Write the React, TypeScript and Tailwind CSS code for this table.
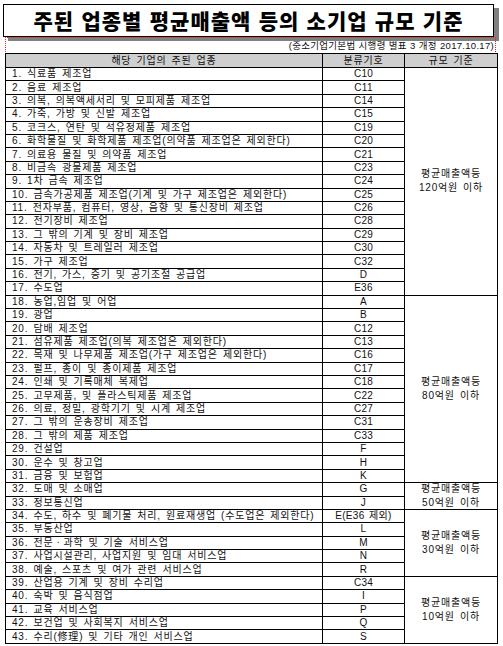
import React from 'react';

/** One row of the table: industry and KSIC code. */
type Row = { name: string; code: string };

/** Size bands; `span` must be a literal Tailwind class so it survives the build. */
const BANDS: { label: string; rows: number; span: string }[] = [
  { label: '120억원 이하', rows: 17, span: 'row-span-17' },
  { label: '80억원 이하', rows: 14, span: 'row-span-14' },
  { label: '50억원 이하', rows: 2, span: 'row-span-2' },
  { label: '30억원 이하', rows: 5, span: 'row-span-5' },
  { label: '10억원 이하', rows: 5, span: 'row-span-5' },
];

const ROWS: Row[] = [
  { name: '식료품 제조업', code: 'C10' },
  { name: '음료 제조업', code: 'C11' },
  { name: '의복, 의복액세서리 및 모피제품 제조업', code: 'C14' },
  { name: '가죽, 가방 및 신발 제조업', code: 'C15' },
  { name: '코크스, 연탄 및 석유정제품 제조업', code: 'C19' },
  { name: '화학물질 및 화학제품 제조업(의약품 제조업은 제외한다)', code: 'C20' },
  { name: '의료용 물질 및 의약품 제조업', code: 'C21' },
  { name: '비금속 광물제품 제조업', code: 'C23' },
  { name: '1차 금속 제조업', code: 'C24' },
  { name: '금속가공제품 제조업(기계 및 가구 제조업은 제외한다)', code: 'C25' },
  { name: '전자부품, 컴퓨터, 영상, 음향 및 통신장비 제조업', code: 'C26' },
  { name: '전기장비 제조업', code: 'C28' },
  { name: '그 밖의 기계 및 장비 제조업', code: 'C29' },
  { name: '자동차 및 트레일러 제조업', code: 'C30' },
  { name: '가구 제조업', code: 'C32' },
  { name: '전기, 가스, 증기 및 공기조절 공급업', code: 'D' },
  { name: '수도업', code: 'E36' },
  { name: '농업,임업 및 어업', code: 'A' },
  { name: '광업', code: 'B' },
  { name: '담배 제조업', code: 'C12' },
  { name: '섬유제품 제조업(의복 제조업은 제외한다)', code: 'C13' },
  { name: '목재 및 나무제품 제조업(가구 제조업은 제외한다)', code: 'C16' },
  { name: '펄프, 종이 및 종이제품 제조업', code: 'C17' },
  { name: '인쇄 및 기록매체 복제업', code: 'C18' },
  { name: '고무제품, 및 플라스틱제품 제조업', code: 'C22' },
  { name: '의료, 정밀, 광학기기 및 시계 제조업', code: 'C27' },
  { name: '그 밖의 운송장비 제조업', code: 'C31' },
  { name: '그 밖의 제품 제조업', code: 'C33' },
  { name: '건설업', code: 'F' },
  { name: '운수 및 창고업', code: 'H' },
  { name: '금융 및 보험업', code: 'K' },
  { name: '도매 및 소매업', code: 'G' },
  { name: '정보통신업', code: 'J' },
  { name: '수도, 하수 및 폐기물 처리, 원료재생업 (수도업은 제외한다)', code: 'E(E36 제외)' },
  { name: '부동산업', code: 'L' },
  { name: '전문ㆍ과학 및 기술 서비스업', code: 'M' },
  { name: '사업시설관리, 사업지원 및 임대 서비스업', code: 'N' },
  { name: '예술, 스포츠 및 여가 관련 서비스업', code: 'R' },
  { name: '산업용 기계 및 장비 수리업', code: 'C34' },
  { name: '숙박 및 음식점업', code: 'I' },
  { name: '교육 서비스업', code: 'P' },
  { name: '보건업 및 사회복지 서비스업', code: 'Q' },
  { name: '수리(修理) 및 기타 개인 서비스업', code: 'S' },
];

// row index -> band that starts there
const BAND_STARTS = new Map<number, (typeof BANDS)[number]>();
{
  let at = 0;
  for (const band of BANDS) {
    BAND_STARTS.set(at, band);
    at += band.rows;
  }
}

export default function App() {
  return (
    <div className="min-h-[646px] w-[503px] bg-white pt-[4px] pl-[3px] text-black font-['Liberation_Sans','Noto_Sans_CJK_KR',sans-serif]">
      {/* Title box with the spreadsheet's drop shadow */}
      <div className="flex h-[33px] w-[491px] items-center justify-center border border-black bg-white shadow-[5px_4px_0_0_#808080]">
        <h1 className="text-[21px] leading-none font-black tracking-[1px] [word-spacing:1.5px] font-['Noto_Sans_CJK_KR',sans-serif]">
          주된 업종별 평균매출액 등의 소기업 규모 기준
        </h1>
      </div>

      {/* Print-area outline (dotted red) around the sheet body */}
      <div className="ml-[2px] w-[491px] border-x border-t border-dotted border-[#ff2020]">
        <div className="flex h-[15px] items-center justify-end pr-[1px] text-[9.5px] leading-[12px] text-[#111] tracking-[0.3px] [word-spacing:0.2px]">
          (중소기업기본법 시행령 별표 3 개정 2017.10.17)
        </div>

        <div className="-ml-px grid w-[493px] grid-cols-[316px_81px_92px] grid-rows-[13px_repeat(43,12.4px)] gap-px border border-black bg-black text-[10px] leading-[12px] text-[#111] tracking-[0.8px] [word-spacing:1.5px]">
          <div className="flex items-center justify-center bg-[#cfcfcf]">해당 기업의 주된 업종</div>
          <div className="flex items-center justify-center bg-[#cfcfcf]">분류기호</div>
          <div className="flex items-center justify-center bg-[#cfcfcf]">규모 기준</div>

          {ROWS.map((row, i) => {
            const band = BAND_STARTS.get(i);
            return (
              <React.Fragment key={row.code + i}>
                <div className="flex items-center overflow-hidden bg-white pl-[6px] whitespace-nowrap">
                  {i + 1}. {row.name}
                </div>
                <div className="flex items-center justify-center bg-white whitespace-nowrap tracking-[0.3px]">{row.code}</div>
                {band && (
                  <div
                    className={`${band.span} flex flex-col items-center justify-center bg-white text-center leading-[14px]`}
                  >
                    <span>평균매출액등</span>
                    <span>{band.label}</span>
                  </div>
                )}
              </React.Fragment>
            );
          })}
        </div>
      </div>
    </div>
  );
}
